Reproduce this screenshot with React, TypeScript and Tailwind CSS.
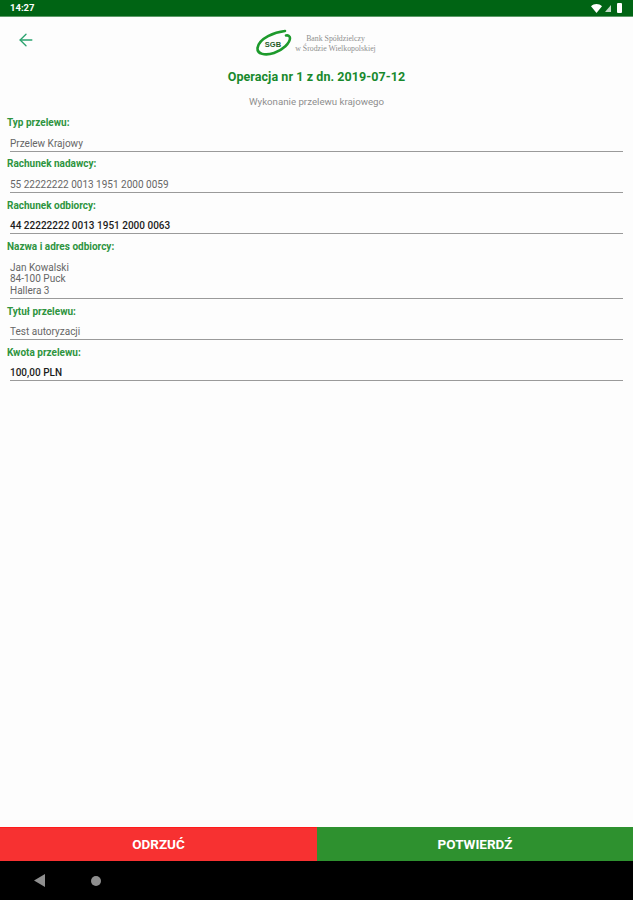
import { ArrowLeft } from 'lucide-react';

const fields = [
  { label: 'Typ przelewu:', lines: ['Przelew Krajowy'] },
  { label: 'Rachunek nadawcy:', lines: ['55 22222222 0013 1951 2000 0059'] },
  { label: 'Rachunek odbiorcy:', lines: ['44 22222222 0013 1951 2000 0063'], strong: true },
  { label: 'Nazwa i adres odbiorcy:', lines: ['Jan Kowalski', '84-100 Puck', 'Hallera 3'] },
  { label: 'Tytuł przelewu:', lines: ['Test autoryzacji'] },
  { label: 'Kwota przelewu:', lines: ['100,00 PLN'], strong: true },
];

function StatusBar() {
  return (
    <div className="h-[17px] bg-[#006414] border-b border-[#5d9a68] flex items-center justify-between pl-[10px] pr-[11px] shrink-0">
      <span className="text-[9.5px] font-bold text-white">14:27</span>
      <div className="flex items-center gap-[3px]">
        <svg width="11" height="9" viewBox="0 0 11 9">
          <path d="M0 2.2C3 -.6 8 -.6 11 2.2L5.5 9Z" fill="#fff" />
        </svg>
        <svg width="6" height="7" viewBox="0 0 6 7">
          <path d="M6 0V7H0Z" fill="#fff" fillOpacity="0.75" />
        </svg>
        <div className="w-[5px] h-[10px] ml-[3px] bg-white rounded-[1px]" />
      </div>
    </div>
  );
}

function Logo() {
  return (
    <div className="flex items-center gap-[3px] -translate-x-[1px]">
      <svg width="37" height="28" viewBox="0 0 37 28">
        <path
          d="M30 2C20 3 4 9 2.500 19C2 25 10 27 19 24C28 21 35 14 35 9C35 7 33 6 31 6.500"
          fill="none"
          stroke="#1d9a2c"
          strokeWidth="2.600"
          strokeLinecap="round"
        />
        <text x="18" y="18" textAnchor="middle" fontSize="7.500" fontWeight="700" fill="#1f5c2a" fontFamily="Liberation Sans, sans-serif">
          SGB
        </text>
      </svg>
      <div className="text-[7.8px] leading-[10px] text-[#8f8f8f] text-center font-['Liberation_Serif',serif] pt-[1px]">
        <div>Bank Spółdzielczy</div>
        <div>w Środzie Wielkopolskiej</div>
      </div>
    </div>
  );
}

function Field({ label, lines, strong }: { label: string; lines: string[]; strong?: boolean }) {
  return (
    <div>
      <div className="text-[10px] leading-[12px] font-bold text-[#2e9440] pl-[7px]">{label}</div>
      <div
        className={`mt-[8.5px] mx-[10px] border-b border-[#9a9a9a] pb-[1.5px] text-[10px] leading-[11.5px] ${
          strong ? 'text-[#1c1c1c] font-medium' : 'text-[#666666]'
        }`}
      >
        {lines.map((line) => (
          <div key={line}>{line}</div>
        ))}
      </div>
    </div>
  );
}

export default function App() {
  return (
    <div className="w-[633px] h-[900px] flex flex-col bg-[#fdfdfd] font-['Roboto',sans-serif] overflow-hidden">
      <StatusBar />

      <div className="flex-1 flex flex-col">
        {/* Header */}
        <div className="h-[52px] flex items-center justify-center relative shrink-0">
          <ArrowLeft className="absolute left-[16px] top-[13px] w-[20px] h-[20px] text-[#2ba36f]" strokeWidth={1.600} />
          <Logo />
        </div>

        <h1 className="text-[12.5px] leading-[16px] font-bold text-[#17892c] text-center tracking-[0.07px]">
          Operacja nr 1 z dn. 2019-07-12
        </h1>
        <p className="mt-[11px] text-[9.7px] leading-[12px] text-[#8e8e8e] text-center">Wykonanie przelewu krajowego</p>

        <div className="mt-[9px] flex flex-col gap-[6.9px]">
          {fields.map((field) => (
            <Field key={field.label} {...field} />
          ))}
        </div>
      </div>

      {/* Actions */}
      <div className="flex h-[34px] shrink-0">
        <button className="w-[317px] bg-[#f73131] border-t border-[#ff1a1a] text-white text-[13.5px] font-bold">ODRZUĆ</button>
        <button className="flex-1 bg-[#2e912f] text-white text-[13.5px] font-bold">POTWIERDŹ</button>
      </div>

      {/* Nav bar */}
      <div className="h-[39px] bg-black flex items-center pl-[34px] gap-[46px] shrink-0">
        <svg width="11" height="13" viewBox="0 0 11 13">
          <path d="M11 0V13L0 6.500Z" fill="#8f8f8f" />
        </svg>
        <div className="w-[10px] h-[10px] rounded-full bg-[#8f8f8f]" />
      </div>
    </div>
  );
}
